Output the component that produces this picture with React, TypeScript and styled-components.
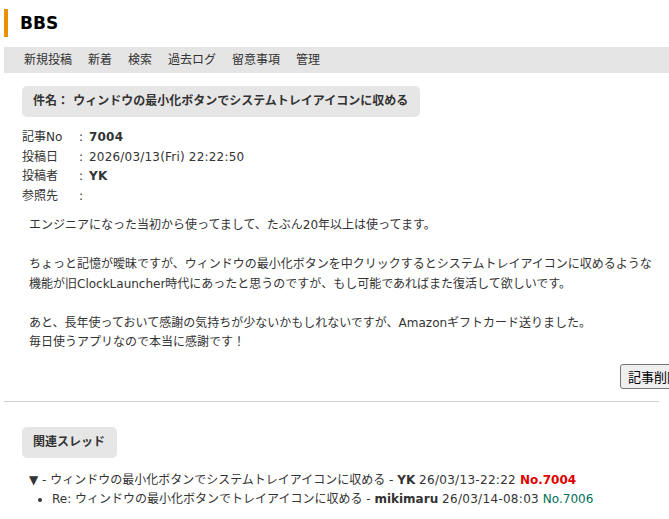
import React from 'react'
import styled, { createGlobalStyle } from 'styled-components'

const GlobalStyle = createGlobalStyle`
  html, body {
    margin: 0;
    padding: 0;
    background: #ffffff;
    overflow-x: hidden;
  }
  body {
    font-family: "DejaVu Sans", "Noto Sans CJK JP", sans-serif;
    font-size: 12px;
    color: #333333;
  }
`

const Page = styled.div`
  padding: 9px 0 20px 4px;
`

const Header = styled.h1`
  margin: 0;
  height: 28px;
  border-left: 4px solid #e98f00;
  padding-left: 12px;
  display: flex;
  align-items: center;
  font-size: 17px;
  font-weight: bold;
  color: #000000;
`

const Nav = styled.nav`
  margin-top: 10px;
  height: 26px;
  background: #e5e5e5;
  padding-left: 20px;
  display: flex;
  gap: 16px;
  line-height: 26px;
  color: #333333;
`

const NavItem = styled.a`
  color: inherit;
  text-decoration: none;
  cursor: pointer;
`

const Label = styled.div<{ $top: number }>`
  display: inline-block;
  margin: ${(p) => p.$top}px 0 0 18px;
  height: 31px;
  line-height: 31px;
  padding: 0 12px 0 11px;
  background: #e6e6e6;
  border-radius: 5px;
  font-weight: bold;
  color: #333333;
`

const Meta = styled.dl`
  margin: 11px 0 0 18px;
  display: grid;
  grid-template-columns: 55px 12px 1fr;
  line-height: 19.6px;
`

const MetaKey = styled.dt`
  margin: 0;
`

const MetaColon = styled.span`
  padding-left: 2px;
`

const MetaValue = styled.dd<{ $bold?: boolean }>`
  margin: 0;
  letter-spacing: 0.2px;
  font-weight: ${(p) => (p.$bold ? 'bold' : 'normal')};
`

const Body = styled.p`
  margin: 10px 0 0 25px;
  line-height: 19.5px;
`

const ButtonRow = styled.div`
  width: 684px;
  margin-top: 11px;
  display: flex;
  justify-content: flex-end;
`

const Button = styled.button`
  height: 25px;
  padding: 0 7px;
  font-family: "DejaVu Sans", "Noto Sans CJK JP", sans-serif;
  font-size: 13px;
  color: #000000;
  background: #efefef;
  border: 1px solid #767676;
  border-radius: 3px;
  white-space: nowrap;
`

const Rule = styled.hr`
  margin: 12px 10px 0 0;
  border: none;
  border-top: 1px solid #cfcfcf;
`

const Thread = styled.div`
  margin: 13px 0 0 25px;
  line-height: 19.5px;
`

const Replies = styled.ul`
  margin: 0;
  padding-left: 23px;
  list-style: disc;
`

const Name = styled.b`
  font-weight: bold;
`

const Stamp = styled.span`
  letter-spacing: 0.3px;
`

const No = styled.span<{ $current?: boolean }>`
  color: ${(p) => (p.$current ? '#e00000' : '#00705a')};
  font-weight: ${(p) => (p.$current ? 'bold' : 'normal')};
`

const navItems = ['新規投稿', '新着', '検索', '過去ログ', '留意事項', '管理']

export default function App() {
  return (
    <>
      <GlobalStyle />
      <Page>
        <Header>BBS</Header>
        <Nav>
          {navItems.map((n) => (
            <NavItem key={n}>{n}</NavItem>
          ))}
        </Nav>
        <Label $top={13}>件名： ウィンドウの最小化ボタンでシステムトレイアイコンに収める</Label>
        <Meta>
          <MetaKey>記事No</MetaKey>
          <MetaColon>:</MetaColon>
          <MetaValue $bold>7004</MetaValue>
          <MetaKey>投稿日</MetaKey>
          <MetaColon>:</MetaColon>
          <MetaValue>2026/03/13(Fri) 22:22:50</MetaValue>
          <MetaKey>投稿者</MetaKey>
          <MetaColon>:</MetaColon>
          <MetaValue $bold>YK</MetaValue>
          <MetaKey>参照先</MetaKey>
          <MetaColon>:</MetaColon>
          <MetaValue></MetaValue>
        </Meta>
        <Body>
          エンジニアになった当初から使ってまして、たぶん20年以上は使ってます。
          <br />
          <br />
          ちょっと記憶が曖昧ですが、ウィンドウの最小化ボタンを中クリックするとシステムトレイアイコンに収めるような
          <br />
          機能が旧ClockLauncher時代にあったと思うのですが、もし可能であればまた復活して欲しいです。
          <br />
          <br />
          あと、長年使っておいて感謝の気持ちが少ないかもしれないですが、Amazonギフトカード送りました。
          <br />
          毎日使うアプリなので本当に感謝です！
        </Body>
        <ButtonRow>
          <Button>記事削除</Button>
        </ButtonRow>
        <Rule />
        <Label $top={25}>関連スレッド</Label>
        <Thread>
          <div>
            ▼ - ウィンドウの最小化ボタンでシステムトレイアイコンに収める - <Name>YK</Name>{' '}
            <Stamp>26/03/13-22:22</Stamp> <No $current>No.7004</No>
          </div>
          <Replies>
            <li>
              Re: ウィンドウの最小化ボタンでトレイアイコンに収める - <Name>mikimaru</Name>{' '}
              <Stamp>26/03/14-08:03</Stamp> <No>No.7006</No>
            </li>
          </Replies>
        </Thread>
      </Page>
    </>
  )
}
